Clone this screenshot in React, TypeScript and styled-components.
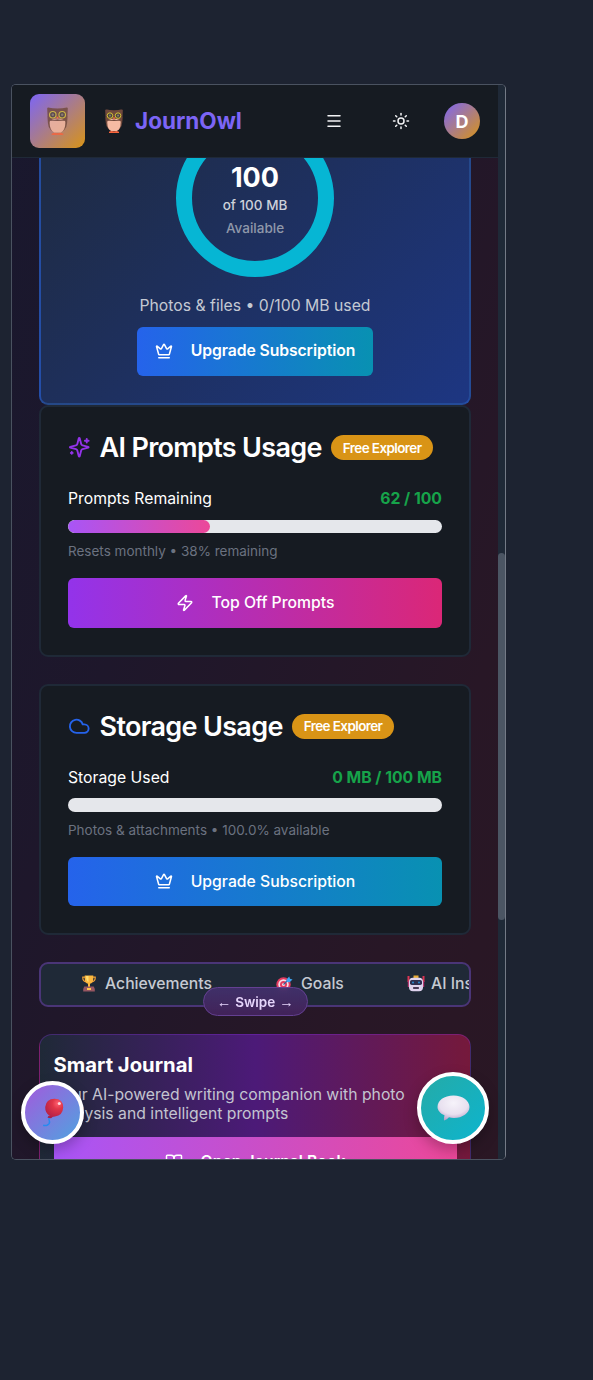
import React from "react";
import styled, { createGlobalStyle } from "styled-components";
import { Menu, Sun, Crown, Zap, Cloud, BookOpen } from "lucide-react";

const GlobalStyle = createGlobalStyle`
  * { box-sizing: border-box; }
  body { margin: 0; background: #1d2331; font-family: Inter, "Liberation Sans", sans-serif; color: #fff; }
  h2, p { margin: 0; }
  button { font: inherit; color: inherit; border: 0; padding: 0; background: none; }
  svg { display: block; flex: none; }
`;

const Page = styled.div`
  height: 1380px;
  padding: 84px 0 0 11px;
  overflow: hidden;
`;

const Frame = styled.div`
  position: relative;
  width: 495px;
  height: 1076px;
  border: 1px solid #4a5260;
  border-right-color: #747a86;
  border-radius: 5px;
  overflow: hidden;
  display: flex;
`;

const Viewport = styled.div`
  width: 486px;
  height: 100%;
  display: flex;
  flex-direction: column;
  background: linear-gradient(110deg, #19182e 0%, #1e172b 35%, #281726 78%, #2a1724 100%);
`;

const Header = styled.header`
  flex: none;
  height: 73px;
  padding: 0 18px;
  display: flex;
  align-items: center;
  background: #161b22;
  border-bottom: 1px solid #1f2937;
`;

const LogoTile = styled.div`
  width: 55px;
  height: 54px;
  border-radius: 9px;
  display: flex;
  align-items: center;
  justify-content: center;
  background: linear-gradient(135deg, #7c65f6, #d99416);
  & > svg { opacity: 0.8; }
`;

const Brand = styled.div`
  display: flex;
  align-items: center;
  gap: 11px;
  margin-left: 19px;
  font-size: 22.5px;
  font-weight: 700;
  line-height: 32px;
  color: #7c65f6;
`;

const Actions = styled.div`
  margin-left: auto;
  display: flex;
  align-items: center;
`;

const IconButton = styled.button`
  width: 40px;
  height: 40px;
  margin-right: 27px;
  display: flex;
  align-items: center;
  justify-content: center;
  color: #f3f4f6;
  &:nth-child(2) { margin-right: 23px; }
`;

const Avatar = styled.div`
  width: 36px;
  height: 36px;
  border-radius: 50%;
  display: flex;
  align-items: center;
  justify-content: center;
  font-size: 18px;
  font-weight: 700;
  background: linear-gradient(135deg, #7c65f6, #d99416);
`;

const Scroll = styled.main`
  flex: 1;
  min-height: 0;
  overflow: hidden;
  padding: 0 27px;
  display: flex;
  flex-direction: column;
  & > * { flex: none; }
`;

const RingCard = styled.section`
  height: 375px;
  margin-top: -128px;
  padding-bottom: 27px;
  border: 2px solid rgba(41, 98, 200, 0.55);
  border-radius: 9px;
  display: flex;
  flex-direction: column;
  align-items: center;
  justify-content: flex-end;
  background: linear-gradient(135deg, #1f2937, #1d3682);
`;

const Ring = styled.div`
  width: 158px;
  height: 158px;
  border: 16px solid #06b6d4;
  border-radius: 50%;
  display: flex;
  flex-direction: column;
  align-items: center;
  padding-top: 25px;
`;

const RingValue = styled.div`
  font-size: 27px;
  font-weight: 700;
  line-height: 36px;
`;

const RingLine = styled.div<{ $dim?: boolean }>`
  font-size: 13.5px;
  font-weight: 500;
  line-height: 18px;
  margin-top: ${(p) => (p.$dim ? 5 : 0)}px;
  color: ${(p) => (p.$dim ? "#8f98aa" : "#ccd1da")};
`;

const RingCaption = styled.p`
  margin: 17px 0 9px;
  font-size: 15.75px;
  line-height: 24px;
  color: #c4c9d3;
`;

const ActionButton = styled.button<{ $tone: "blue" | "pink"; $width?: string }>`
  width: ${(p) => p.$width ?? "100%"};
  height: 49.5px;
  border-radius: 6px;
  display: flex;
  align-items: center;
  justify-content: center;
  gap: 18px;
  font-size: 15.75px;
  font-weight: ${(p) => (p.$width ? 600 : 500)};
  letter-spacing: ${(p) => (p.$width ? "-0.09px" : "0")};
  padding-bottom: ${(p) => (p.$width ? 1 : 0)}px;
  background: ${(p) =>
    p.$tone === "blue"
      ? "linear-gradient(90deg, #2563eb, #0891b2)"
      : "linear-gradient(90deg, #9333ea, #db2777)"};
`;

const UsageCard = styled.section`
  height: 251.5px;
  padding: 27px;
  border: 2px solid #1f2937;
  border-radius: 9px;
  background: #161b22;
  & + & { margin-top: 27px; }
`;

const CardTitle = styled.h2`
  height: 27px;
  display: flex;
  align-items: center;
  gap: 9px;
  font-size: 27px;
  font-weight: 600;
  letter-spacing: -0.675px;
  white-space: nowrap;
`;

const Badge = styled.span`
  height: 25px;
  padding: 0 12px;
  border-radius: 13px;
  display: flex;
  align-items: center;
  font-size: 13.5px;
  letter-spacing: -0.6px;
  background: #d99416;
`;

const Row = styled.div`
  margin-top: 25.5px;
  height: 24px;
  display: flex;
  align-items: center;
  justify-content: space-between;
  font-size: 15.75px;
`;

const Amount = styled.span`
  font-weight: 700;
  color: #16a34a;
`;

const Track = styled.div`
  height: 13.5px;
  margin: 9px 0;
  border-radius: 7px;
  overflow: hidden;
  background: #e5e7eb;
`;

const Fill = styled.div`
  height: 100%;
  border-radius: 7px;
  background: linear-gradient(90deg, #a855f7, #ec4899);
`;

const Note = styled.p`
  margin-bottom: 18px;
  font-size: 13.5px;
  line-height: 18px;
  color: #6b7280;
`;

const TabsWrap = styled.div`
  position: relative;
  margin-top: 27px;
`;

const Tabs = styled.nav`
  height: 45px;
  padding-left: 41px;
  border: 2px solid #4a3577;
  border-radius: 9px;
  overflow: hidden;
  display: flex;
  align-items: center;
  background: #1f2937;
`;

const Tab = styled.div<{ $width: number; $gap: number }>`
  flex: none;
  width: ${(p) => p.$width}px;
  display: flex;
  align-items: center;
  gap: ${(p) => p.$gap}px;
  padding-bottom: 2px;
  font-size: 15.75px;
  font-weight: 500;
  color: #c5cad2;
  white-space: nowrap;
`;

const Swipe = styled.div`
  position: absolute;
  left: 164px;
  top: 25px;
  width: 104.5px;
  height: 29px;
  border: 1px solid #644092;
  border-radius: 15px;
  display: flex;
  align-items: center;
  justify-content: center;
  gap: 4px;
  font-size: 13.5px;
  font-weight: 600;
  color: #e6d5fb;
  white-space: nowrap;
  background: linear-gradient(180deg, rgba(66, 48, 108, 0.93), rgba(68, 36, 92, 0.93));
  backdrop-filter: blur(4px);
`;

const Arrow = styled.span`
  font-family: "Liberation Sans", sans-serif;
  font-weight: 400;
  font-size: 14.5px;
`;

const JournalCard = styled.section`
  height: 220px;
  margin-top: 27px;
  padding: 16px 13.5px;
  border: 1px solid rgba(147, 51, 234, 0.3);
  border-radius: 13px;
  background: linear-gradient(90deg, #1f2937, #4c1a78 50%, #75193b);
`;

const JournalTitle = styled.h2`
  font-size: 20.25px;
  font-weight: 700;
  line-height: 27px;
`;

const JournalText = styled.p`
  margin: 7px 0 14px;
  font-size: 15.75px;
  line-height: 19px;
  color: #c3c4d0;
`;

const JournalButton = styled.button`
  width: 100%;
  height: 49.5px;
  display: flex;
  align-items: center;
  justify-content: center;
  gap: 18px;
  font-size: 15.75px;
  font-weight: 600;
  background: linear-gradient(90deg, #a855f7, #ec4899);
`;

const Scrollbar = styled.div`
  width: 7px;
  height: 100%;
  padding-top: 468px;
  background: #1f2937;
`;

const Thumb = styled.div`
  height: 367px;
  border-radius: 4px;
  background: #4b5563;
`;

const Fab = styled.button<{ $size: number; $x: number; $y: number; $bg: string }>`
  position: absolute;
  left: ${(p) => p.$x}px;
  top: ${(p) => p.$y}px;
  width: ${(p) => p.$size}px;
  height: ${(p) => p.$size}px;
  border-radius: 50%;
  border: 4px solid #fff;
  display: flex;
  align-items: center;
  justify-content: center;
  background: ${(p) => p.$bg};
  background-origin: border-box;
  box-shadow: 0 6px 14px rgba(0, 0, 0, 0.25);
`;

const SparklesIcon = () => (
  <svg width="22.5" height="22.5" viewBox="0 0 24 24" fill="none" stroke="#9333ea" strokeWidth="2" strokeLinecap="round" strokeLinejoin="round">
    <path d="M9.937 15.500A2 2 0 0 0 8.500 14.063l-6.135-1.582a.5.5 0 0 1 0-.962L8.500 9.936A2 2 0 0 0 9.937 8.500l1.582-6.135a.5.5 0 0 1 .963 0L14.063 8.500A2 2 0 0 0 15.500 9.937l6.135 1.581a.5.5 0 0 1 0 .964L15.500 14.063a2 2 0 0 0-1.437 1.437l-1.582 6.135a.5.5 0 0 1-.963 0z" />
    <path d="M20 3v4M22 5h-4M4 17v2M5 18H3" />
  </svg>
);

const Owl = ({ w, h }: { w: number; h: number }) => (
  <svg width={w} height={h} viewBox="0 0 20 25">
    <path d="M.8 1.200Q1 0 2.800.6Q5 1.300 10 1.300Q15 1.300 17.200.6Q19 0 19.200 1.200L18.600 14Q18 22 10 23.500Q2 22 1.400 14Z" fill="#70493c" />
    <path d="M3.500 11Q10 9.500 16.500 11L17 14Q17 21 12.800 23H7.200Q3 21 3 14Z" fill="#f6bba3" />
    <path d="M1.300 8Q5 12.500 10 11Q15 12.500 18.700 8L18.500 12.500Q14 11.800 10 12.600Q6 11.800 1.500 12.500Z" fill="#70493c" />
    <circle cx="5.800" cy="6.900" r="2.900" fill="#4a433e" stroke="#d9c534" strokeWidth="1" />
    <circle cx="14.200" cy="6.900" r="2.900" fill="#4a433e" stroke="#d9c534" strokeWidth="1" />
    <circle cx="5.800" cy="6.900" r="1.100" fill="#857a6c" />
    <circle cx="14.200" cy="6.900" r="1.100" fill="#857a6c" />
    <path d="M8.700 8.800H11.300L10 11Z" fill="#ff713d" />
    <path d="M4.800 23.800Q7.500 22.300 10 23.500Q12.500 22.300 15.200 23.800V25H4.800Z" fill="#f7643d" />
  </svg>
);

const Trophy = () => (
  <svg width="14" height="17" viewBox="0 0 14 17">
    <path d="M3 2.200H.800Q.500 6.500 4.500 6.800M11 2.200H13.200Q13.500 6.500 9.500 6.800" fill="none" stroke="#f3a136" strokeWidth="1.200" />
    <path d="M2.700.500H11.300V4Q11 8 8 8.800V12H6V8.800Q3 8 2.700 4Z" fill="#fcb73d" />
    <path d="M4 1H6.500V7Q4 6 4 1Z" fill="#ffde72" />
    <path d="M2.300 11.500H11.700L12.800 14V16.500H1.200V14Z" fill="#965661" />
    <path d="M5 13H9V15H5Z" fill="#ffc64d" />
  </svg>
);

const Target = () => (
  <svg width="17" height="16" viewBox="0 0 17 16">
    <circle cx="7.500" cy="8.500" r="7.200" fill="#e33b60" />
    <circle cx="7.500" cy="8.500" r="5.200" fill="#f6dce6" />
    <circle cx="7.500" cy="8.500" r="3.500" fill="#e33b60" />
    <circle cx="7.500" cy="8.500" r="1.500" fill="#f6dce6" />
    <path d="M7.500 8.500L12 4" stroke="#3b5d94" strokeWidth="1.200" />
    <path d="M10.500 3.500L13.200.500L14 2.700L16.500 3.500L13.700 6.200L10.700 6Z" fill="#3ea5f2" />
  </svg>
);

const Robot = () => (
  <svg width="18" height="17" viewBox="0 0 18 17">
    <path d="M.500 1H2.500V7H.500ZM15.500 1H17.500V7H15.500Z" fill="#dc3554" />
    <path d="M.800 6H3V12H.800ZM15 6H17.200V12H15Z" fill="#b53a72" />
    <path d="M6.500.500H11.500V4H6.500Z" fill="#e9ad37" />
    <rect x="2" y="2.800" width="14" height="13.500" rx="4" fill="#dfd3ee" />
    <rect x="3" y="5" width="12" height="5" rx="1.800" fill="#2d2e50" />
    <circle cx="6" cy="7.500" r="1.100" fill="#2a83c8" />
    <circle cx="12" cy="7.500" r="1.100" fill="#2a83c8" />
    <rect x="6" y="12" width="6" height="2" rx=".700" fill="#493b59" />
  </svg>
);

const Balloon = () => (
  <svg width="22" height="29" viewBox="0 0 22 29">
    <defs>
      <radialGradient id="balloon" cx=".7" cy=".25" r=".75">
        <stop offset="0" stopColor="#ff6070" />
        <stop offset=".4" stopColor="#e03548" />
        <stop offset="1" stopColor="#b92347" />
      </radialGradient>
    </defs>
    <path d="M7.500 19.500Q6 21.500 7.500 23.500Q8 26 5 27.200Q3 27.800 1.200 27.200" fill="none" stroke="#278af0" strokeWidth="1.500" />
    <path d="M12.500.800Q21.200 1 21.200 9.500Q20.700 17.500 13 18.500Q10 18.900 8 19.500L7.800 18Q3 15 3.200 9Q4 1 12.500 .800Z" fill="url(#balloon)" />
    <path d="M6.500 17.800L10.500 19L9 20.300L5.500 19.800Z" fill="#a62046" />
    <circle cx="17.300" cy="5.500" r="1.500" fill="#ffd7dd" />
  </svg>
);

const Bubble = () => (
  <svg width="33" height="26" viewBox="0 0 33 26">
    <defs>
      <radialGradient id="bubble" cx=".5" cy=".3" r=".7">
        <stop offset="0" stopColor="#f6f3fa" />
        <stop offset=".65" stopColor="#e8e0ef" />
        <stop offset="1" stopColor="#b9a4cb" />
      </radialGradient>
    </defs>
    <path d="M16.500.500C26 .500 32.500 6 32.500 12C32.500 18 25.500 23 17 23Q14 23 12 22.300Q10 24.500 7.200 25.500Q6.500 24.500 7.500 20.300C3 18.500 .500 15 .500 12C.500 5.500 7 .500 16.500 .500Z" fill="url(#bubble)" />
  </svg>
);

export default function App() {
  return (
    <>
      <GlobalStyle />
      <Page>
        <Frame>
          <Viewport>
            <Header>
              <LogoTile><Owl w={23} h={28} /></LogoTile>
              <Brand>
                <Owl w={20} h={24} />
                <span>JournOwl</span>
              </Brand>
              <Actions>
                <IconButton aria-label="Menu"><Menu size={18} /></IconButton>
                <IconButton aria-label="Theme"><Sun size={18} /></IconButton>
                <Avatar>D</Avatar>
              </Actions>
            </Header>
            <Scroll>
              <RingCard>
                <Ring>
                  <RingValue>100</RingValue>
                  <RingLine>of 100 MB</RingLine>
                  <RingLine $dim>Available</RingLine>
                </Ring>
                <RingCaption>Photos &amp; files • 0/100 MB used</RingCaption>
                <ActionButton $tone="blue" $width="236px">
                  <Crown size={18} />
                  Upgrade Subscription
                </ActionButton>
              </RingCard>
              <UsageCard>
                <CardTitle>
                  <SparklesIcon />
                  AI Prompts Usage
                  <Badge>Free Explorer</Badge>
                </CardTitle>
                <Row>
                  <span>Prompts Remaining</span>
                  <Amount>62 / 100</Amount>
                </Row>
                <Track><Fill style={{ width: "38%" }} /></Track>
                <Note>Resets monthly • 38% remaining</Note>
                <ActionButton $tone="pink">
                  <Zap size={18} />
                  Top Off Prompts
                </ActionButton>
              </UsageCard>
              <UsageCard>
                <CardTitle>
                  <Cloud size={22.5} color="#2563eb" />
                  Storage Usage
                  <Badge>Free Explorer</Badge>
                </CardTitle>
                <Row>
                  <span>Storage Used</span>
                  <Amount>0 MB / 100 MB</Amount>
                </Row>
                <Track />
                <Note>Photos &amp; attachments • 100.0% available</Note>
                <ActionButton $tone="blue">
                  <Crown size={18} />
                  Upgrade Subscription
                </ActionButton>
              </UsageCard>
              <TabsWrap>
                <Tabs>
                  <Tab $width={194} $gap={9}><Trophy />Achievements</Tab>
                  <Tab $width={131} $gap={8}><Target />Goals</Tab>
                  <Tab $width={120} $gap={6}><Robot />AI Insights</Tab>
                </Tabs>
                <Swipe>
                  <Arrow>←</Arrow>
                  Swipe
                  <Arrow>→</Arrow>
                </Swipe>
              </TabsWrap>
              <JournalCard>
                <JournalTitle>Smart Journal</JournalTitle>
                <JournalText>
                  Your AI-powered writing companion with photo analysis and intelligent prompts
                </JournalText>
                <JournalButton>
                  <BookOpen size={18} />
                  Open Journal Book
                </JournalButton>
              </JournalCard>
            </Scroll>
          </Viewport>
          <Scrollbar><Thumb /></Scrollbar>
          <Fab $size={63} $x={9} $y={996} $bg="linear-gradient(135deg, #a855dc, #4aa8e0)" aria-label="Celebrate">
            <Balloon />
          </Fab>
          <Fab $size={72} $x={405} $y={987} $bg="linear-gradient(135deg, #26aaa5, #0cb5d0)" aria-label="Chat">
            <Bubble />
          </Fab>
        </Frame>
      </Page>
    </>
  );
}
